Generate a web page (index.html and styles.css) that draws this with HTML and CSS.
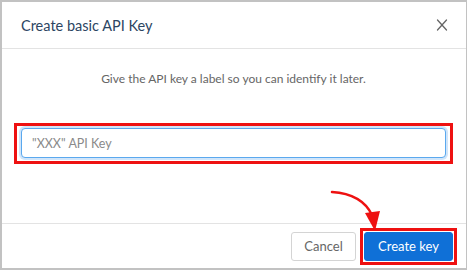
FILE: index.html
```html
<!DOCTYPE html>
<html lang="en">

<head>
  <meta charset="UTF-8">
  <meta name="viewport" content="width=device-width, initial-scale=1.0">
  <title>Create basic API Key</title>
  <link rel="stylesheet" href="styles.css">
</head>

<body>
  <div class="dialog">
    <div class="dialog-header">
      <h2 class="dialog-title">Create basic API Key</h2>
      <button class="close-button" aria-label="Close">
        <svg viewBox="0 0 12 12" width="12" height="12" fill="none" stroke="currentColor" stroke-width="1.3" stroke-linecap="round">
          <line x1="1.5" y1="1" x2="10.5" y2="11"></line>
          <line x1="10.5" y1="1" x2="1.5" y2="11"></line>
        </svg>
      </button>
    </div>

    <div class="dialog-body">
      <p class="dialog-description">Give the API key a label so you can identify it later.</p>
      <div class="highlight highlight-input">
        <input class="key-input" type="text" placeholder="&quot;XXX&quot; API Key">
      </div>
    </div>

    <div class="dialog-footer">
      <button class="btn btn-cancel">Cancel</button>
      <div class="highlight highlight-button">
        <button class="btn btn-primary">Create key</button>
      </div>
    </div>

    <!-- annotation arrow -->
    <svg class="annotation-arrow" width="467" height="270" viewBox="0 0 467 270">
      <path d="M332 192 Q362 194 372 215" fill="none" stroke="#ee1111" stroke-width="2.5" stroke-linecap="round" />
      <polygon points="365,213 380,211 375,231" fill="#ee1111" />
    </svg>
  </div>
</body>

</html>
```

FILE: styles.css
```css
:root {
  --border: #c2c2c2;
  --divider: #e3e3e3;
  --title: #2c4563;
  --text-secondary: #666666;
  --primary: #0f70d7;
  --annotation: #ee1111;
}

* {
  box-sizing: border-box;
  margin: 0;
  padding: 0;
}

body {
  font-family: Lato, "Open Sans", sans-serif;
  background: #ffffff;
}

.dialog {
  position: relative;
  width: 467px;
  height: 270px;
  border: 2px solid var(--border);
  border-right-width: 1px;
  display: flex;
  flex-direction: column;
  background: #ffffff;
}

.dialog-header {
  height: 47px;
  border-bottom: 1px solid var(--divider);
  display: flex;
  align-items: center;
  justify-content: space-between;
  padding: 0 18px 0 19px;
}

.dialog-title {
  font-size: 14.5px;
  font-weight: 400;
  color: var(--title);
}

.close-button {
  background: none;
  border: none;
  color: #666666;
  display: flex;
  cursor: pointer;
}

.dialog-body {
  height: 174px;
  padding: 22px 13px 0 12px;
}

.dialog-description {
  font-size: 12px;
  line-height: 16px;
  color: var(--text-secondary);
  text-align: center;
  margin-bottom: 36px;
}

.highlight {
  border: 3px solid var(--annotation);
}

.highlight-input {
  padding: 2px 4px 3px;
}

.key-input {
  display: block;
  width: 100%;
  height: 30px;
  border: 1px solid #5aa8ee;
  border-radius: 4px;
  box-shadow: 0 0 0 2px rgba(120, 180, 240, 0.35);
  padding: 0 10px;
  font-family: Lato, "Open Sans", sans-serif;
  font-size: 12.5px;
  color: #333333;
  outline: none;
}

.key-input::placeholder {
  color: #8a8a8a;
}

.dialog-footer {
  height: 45px;
  border-top: 1px solid var(--divider);
  display: flex;
  align-items: center;
  justify-content: flex-end;
  gap: 4px;
  padding-right: 9px;
}

.highlight-button {
  padding: 1px;
}

.btn {
  display: block;
  height: 29px;
  border-radius: 3px;
  font-family: Lato, "Open Sans", sans-serif;
  font-size: 13px;
  cursor: pointer;
}

.btn-cancel {
  width: 65px;
  background: #ffffff;
  border: 1px solid #d4d4d4;
  color: var(--text-secondary);
}

.btn-primary {
  width: 89px;
  background: var(--primary);
  border: 1px solid var(--primary);
  color: #ffffff;
}

.annotation-arrow {
  position: absolute;
  top: -2px;
  left: -2px;
  pointer-events: none;
}
```
